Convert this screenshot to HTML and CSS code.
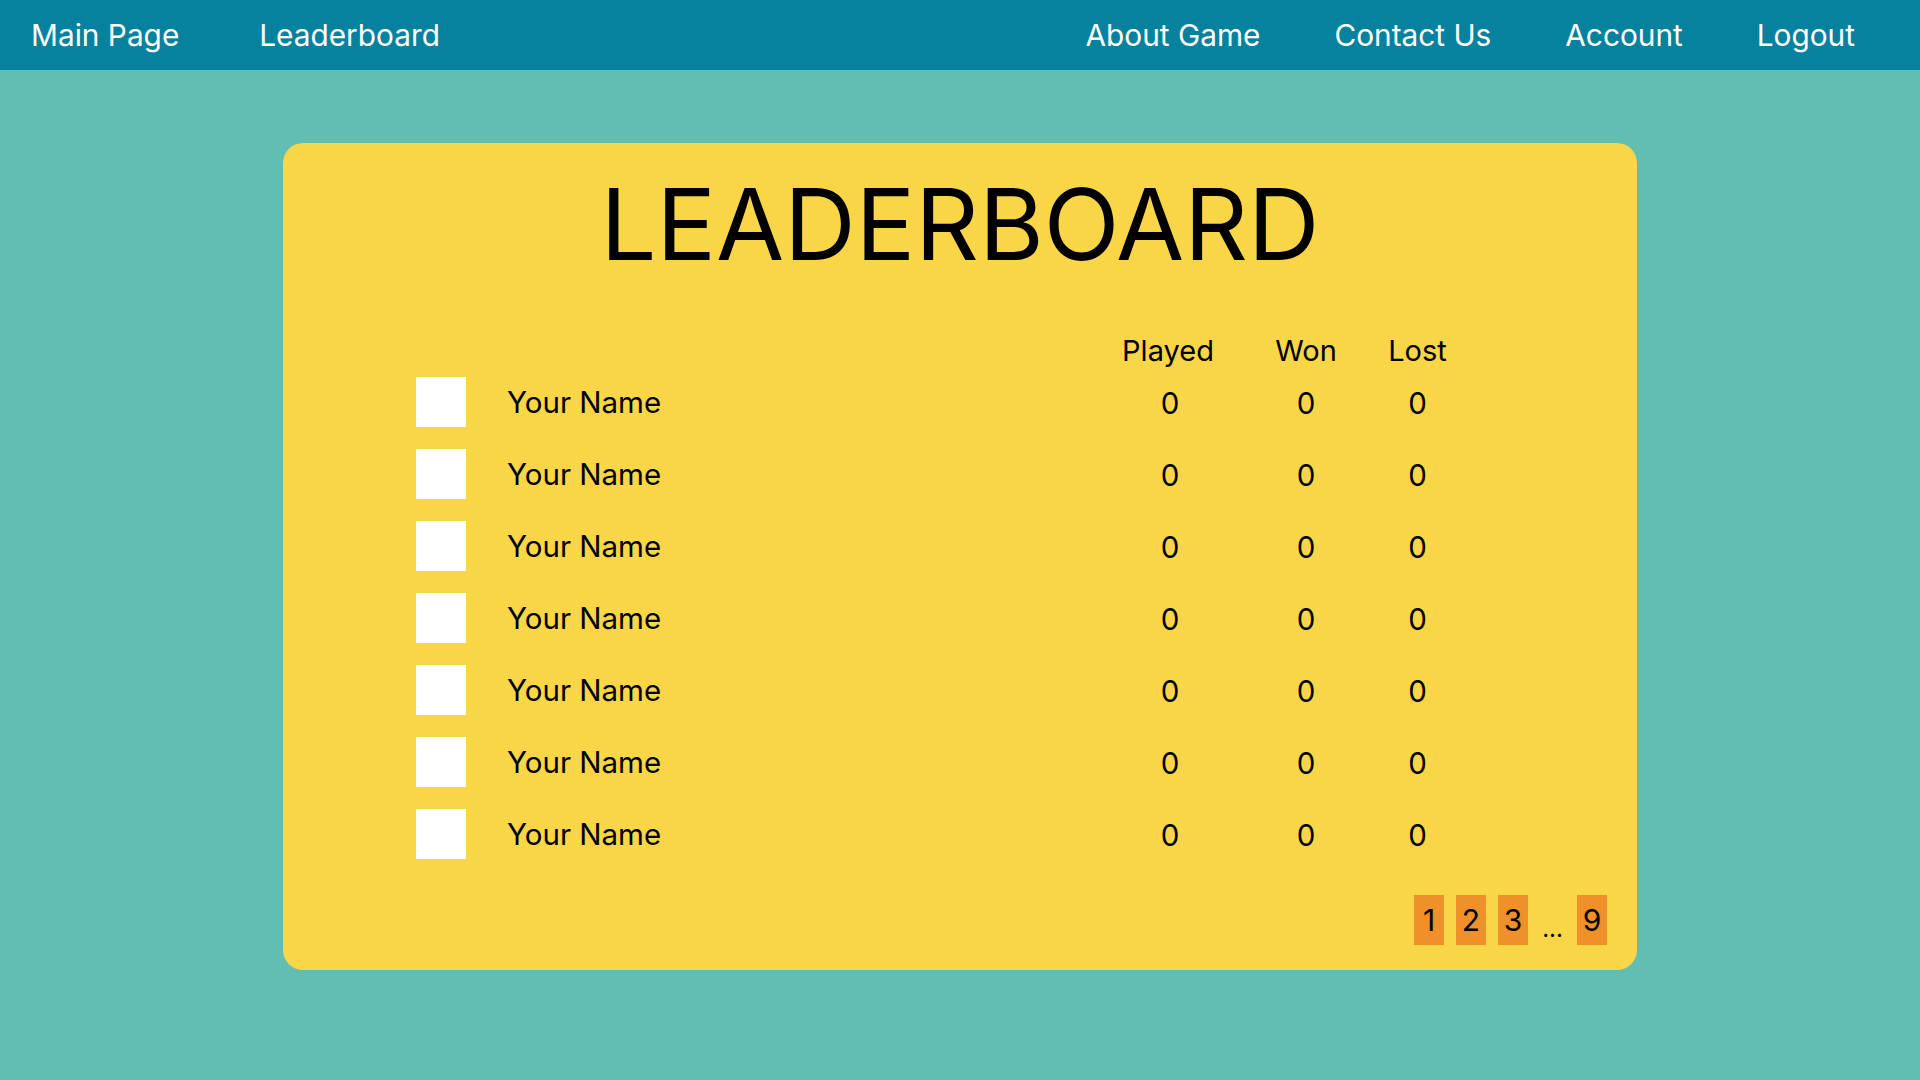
FILE: index.html
```html
<!DOCTYPE html>
<html lang="en">
<head>
<meta charset="utf-8">
<title>Leaderboard</title>
<link rel="stylesheet" href="styles.css">
</head>
<body>
<nav class="topbar">
  <div class="nav-left">
    <a class="nav-link" href="#">Main Page</a>
    <a class="nav-link" href="#">Leaderboard</a>
  </div>
  <div class="nav-right">
    <a class="nav-link" href="#">About Game</a>
    <a class="nav-link" href="#">Contact Us</a>
    <a class="nav-link" href="#">Account</a>
    <a class="nav-link" href="#">Logout</a>
  </div>
</nav>
<main class="page">
  <section class="card">
    <h1 class="title">LEADERBOARD</h1>
    <div class="board">
      <div class="row head">
        <span></span><span></span>
        <span class="num">Played</span>
        <span class="num">Won</span>
        <span class="num">Lost</span>
      </div>
      <div class="row"><span class="avatar"></span><span class="name">Your Name</span><span class="num first">0</span><span class="num">0</span><span class="num">0</span></div>
      <div class="row"><span class="avatar"></span><span class="name">Your Name</span><span class="num first">0</span><span class="num">0</span><span class="num">0</span></div>
      <div class="row"><span class="avatar"></span><span class="name">Your Name</span><span class="num first">0</span><span class="num">0</span><span class="num">0</span></div>
      <div class="row"><span class="avatar"></span><span class="name">Your Name</span><span class="num first">0</span><span class="num">0</span><span class="num">0</span></div>
      <div class="row"><span class="avatar"></span><span class="name">Your Name</span><span class="num first">0</span><span class="num">0</span><span class="num">0</span></div>
      <div class="row"><span class="avatar"></span><span class="name">Your Name</span><span class="num first">0</span><span class="num">0</span><span class="num">0</span></div>
      <div class="row"><span class="avatar"></span><span class="name">Your Name</span><span class="num first">0</span><span class="num">0</span><span class="num">0</span></div>
    </div>
    <div class="pager">
      <a class="page-btn" href="#">1</a>
      <a class="page-btn" href="#">2</a>
      <a class="page-btn" href="#">3</a>
      <span class="dots">...</span>
      <a class="page-btn" href="#">9</a>
    </div>
  </section>
</main>
</body>
</html>
```
FILE: styles.css
```css
* { box-sizing: border-box; }
html, body {
  margin: 0;
  padding: 0;
}
body {
  background: #62bdb3;
  font-family: Inter, "Noto Sans", sans-serif;
  color: #000;
  min-height: 1080px;
}
.topbar {
  height: 70px;
  background: #06819e;
  display: flex;
  justify-content: space-between;
  align-items: center;
  padding: 0 65px 0 31px;
}
.nav-left { display: flex; gap: 80px; }
.nav-right { display: flex; gap: 74px; }
.nav-link {
  color: #fff;
  text-decoration: none;
  font-size: 29.8px;
  line-height: 70px;
}
.page {
  display: flex;
  justify-content: center;
  padding-top: 73px;
}
.card {
  width: 1354px;
  background: #f9d548;
  border-radius: 20px;
  padding: 21px 30px 25px 0;
  display: flex;
  flex-direction: column;
}
.title {
  margin: 0;
  font-weight: 400;
  font-size: 99px;
  line-height: 120px;
  text-align: center;
  padding-left: 30px;
}
.board {
  margin-top: 49px;
  padding: 0 146px 0 133px;
  display: flex;
  flex-direction: column;
  gap: 22px;
}
.row {
  display: grid;
  grid-template-columns: 50px 1fr 140px 136px 87px;
  align-items: center;
  height: 50px;
  font-size: 29.5px;
  line-height: 50px;
}
.row .num {
  height: 50px;
  padding-top: 1px;
}
.row .num.first { padding-left: 4px; }
.row.head {
  height: 36px;
  line-height: 36px;
  margin-bottom: -14px;
  font-size: 29px;
}
.row.head .num { padding-top: 0; height: 36px; }
.avatar {
  width: 50px;
  height: 50px;
  background: #fff;
}
.name { padding-left: 41px; }
.num { text-align: center; }
.pager {
  margin-top: 36px;
  display: flex;
  justify-content: flex-end;
  gap: 12px;
}
.page-btn {
  width: 30px;
  height: 50px;
  background: #ef902b;
  color: #000;
  text-decoration: none;
  font-size: 30px;
  line-height: 50px;
  text-align: center;
}
.dots {
  width: 25px;
  align-self: flex-end;
  font-size: 24px;
  line-height: 24px;
  margin-bottom: 4px;
  text-align: center;
}
```
